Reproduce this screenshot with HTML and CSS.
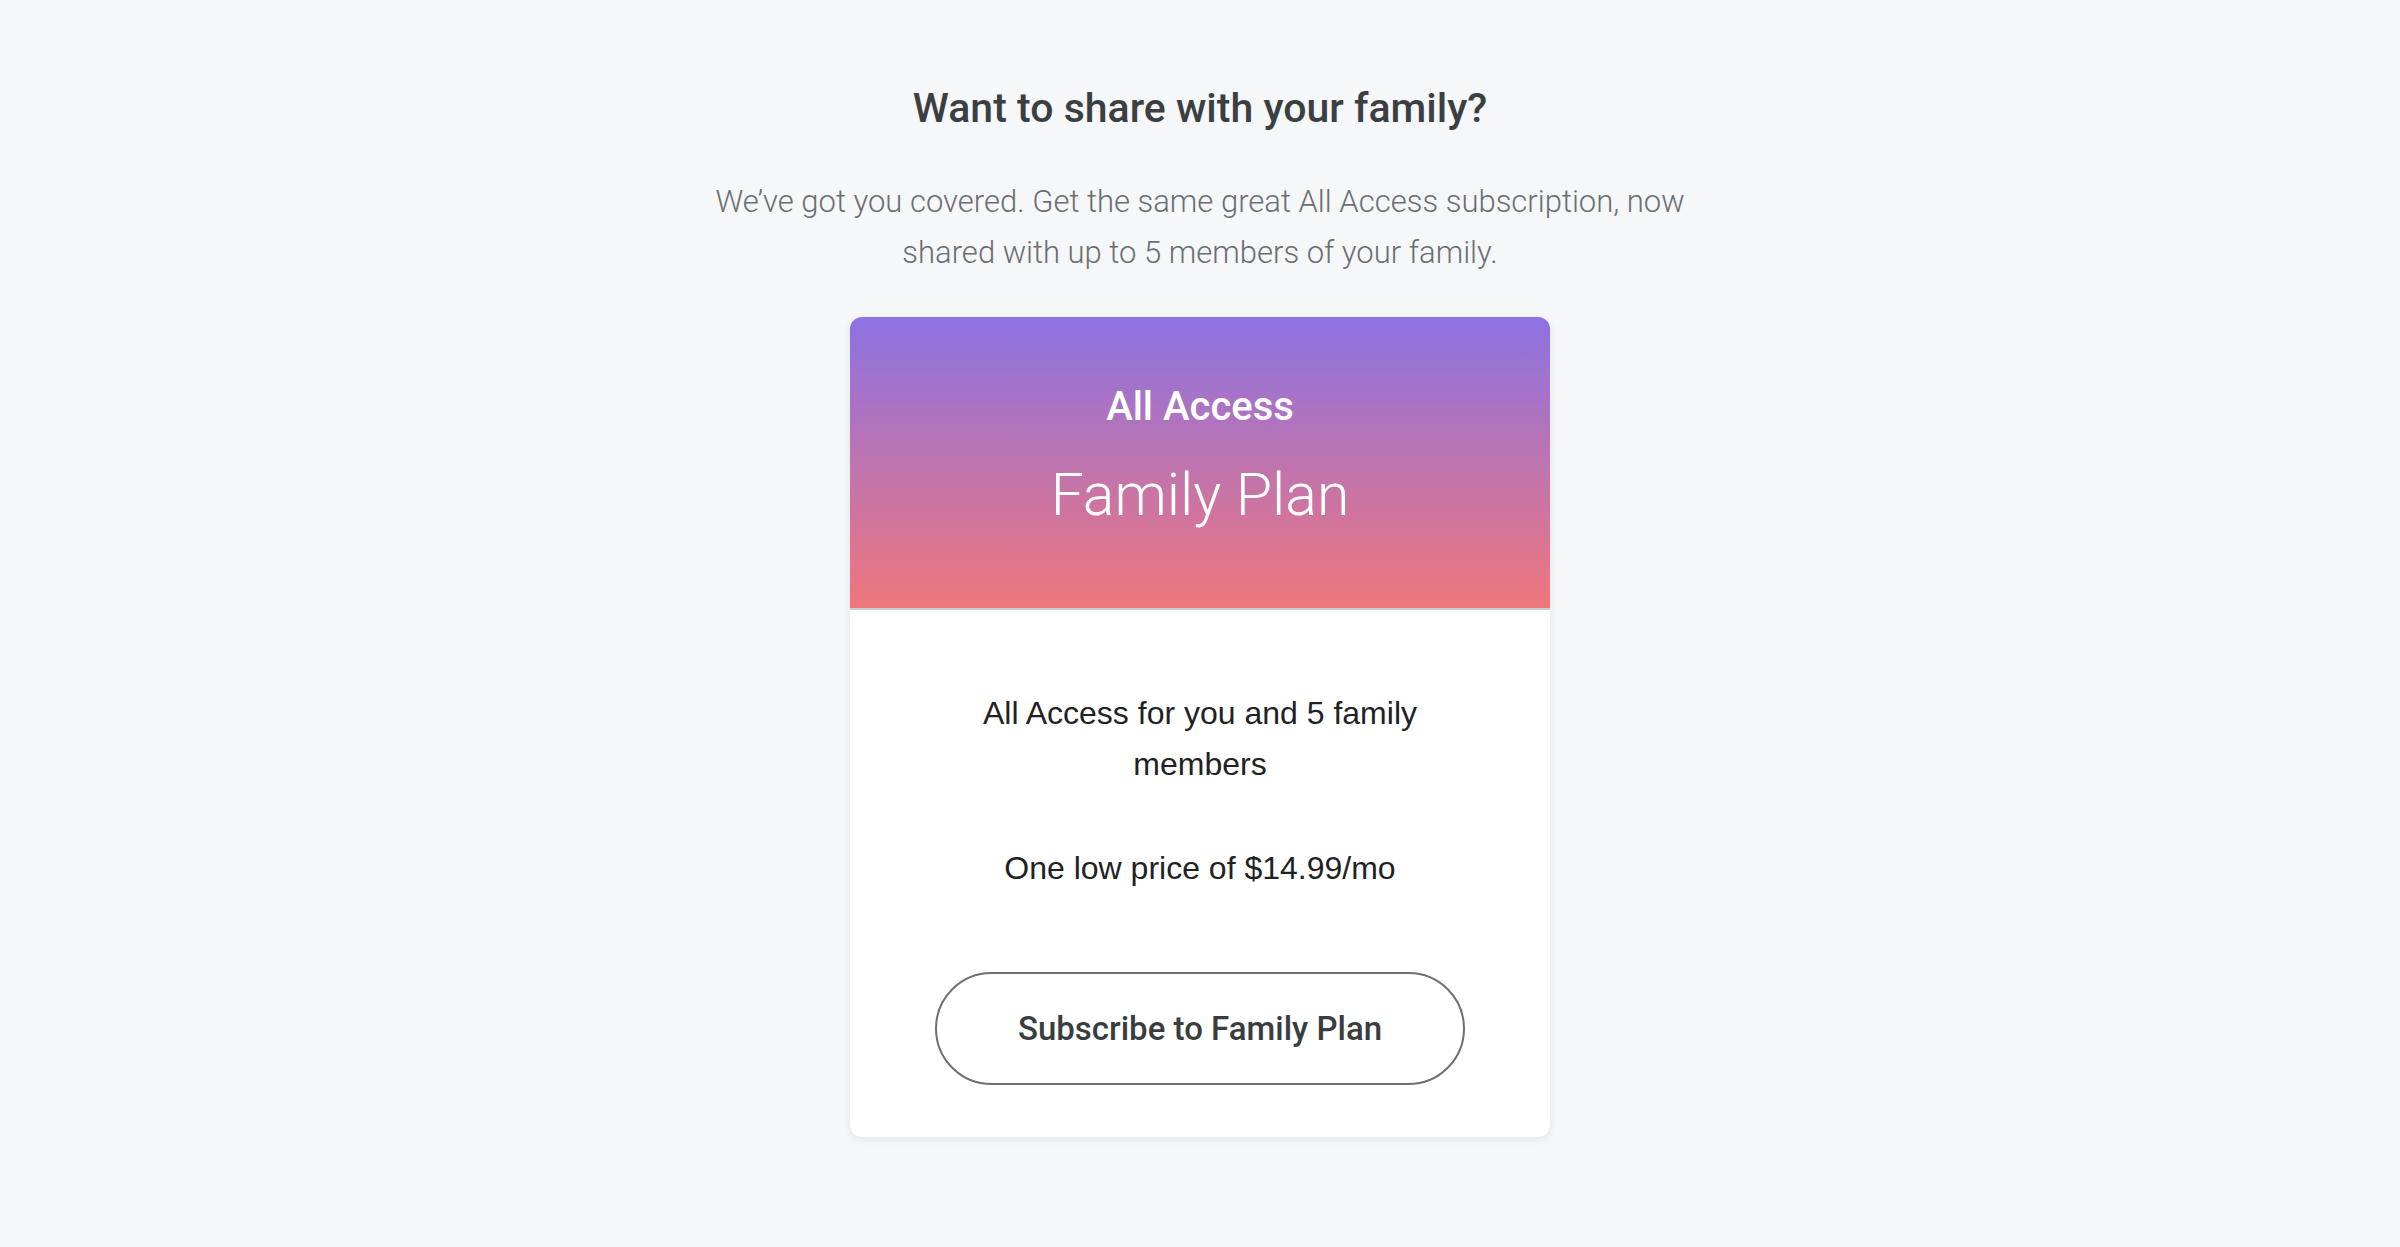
FILE: index.html
```html
<!DOCTYPE html>
<html lang="en">
<head>
  <meta charset="UTF-8" />
  <meta name="viewport" content="width=device-width, initial-scale=1.0" />
  <title>Family Plan</title>
  <link rel="stylesheet" href="styles.css">
</head>
<body>
  <section class="family">
    <h1>Want to share with your family?</h1>
    <p class="intro">We’ve got you covered. Get the same great All Access subscription, now shared with up to 5 members of your family.</p>

    <div class="plan">
      <div class="plan-head">
        <div class="plan-tier">All Access</div>
        <div class="plan-name">Family Plan</div>
      </div>
      <div class="plan-body">
        <p class="perk">All Access for you and 5 family members</p>
        <p class="perk price">One low price of $14.99/mo</p>
        <button class="subscribe" type="button">Subscribe to Family Plan</button>
      </div>
    </div>
  </section>
</body>
</html>
```

FILE: styles.css
```css
:root {
  --bg: #f6f7f9;
  --heading: #3b3f42;
  --muted: #6b6e71;
  --text: #1f2224;
  --purple: #8b72e3;
  --coral: #f0767c;
}
* {
  box-sizing: border-box;
}
body {
  margin: 0;
  min-height: 100vh;
  background: var(--bg);
  font-family: "Liberation Sans", Arial, sans-serif;
  color: var(--text);
}
.family {
  display: flex;
  flex-direction: column;
  align-items: center;
  padding: 84px 20px 60px;
  text-align: center;
}
h1 {
  margin: 0;
  font-family: Roboto, "Liberation Sans", sans-serif;
  font-size: 41px;
  line-height: 48px;
  font-weight: 500;
  color: var(--heading);
}
.intro {
  max-width: 1010px;
  margin: 44px 0 0;
  font-family: Roboto, "Liberation Sans", sans-serif;
  font-weight: 300;
  font-size: 31px;
  line-height: 51px;
  color: var(--muted);
}
.plan {
  width: 700px;
  margin-top: 39px;
  background: #fff;
  border-radius: 12px;
  overflow: hidden;
  box-shadow: 0 2px 10px rgba(0, 0, 0, 0.08);
}
.plan-head {
  padding: 66px 20px 77px;
  background: linear-gradient(180deg, var(--purple), var(--coral));
  border-bottom: 2px solid #c9d0d4;
  color: #fff;
  font-family: Roboto, "Liberation Sans", sans-serif;
}
.plan-tier {
  font-size: 40px;
  line-height: 48px;
  font-weight: 500;
}
.plan-name {
  margin-top: 28px;
  font-size: 59px;
  line-height: 72px;
  font-weight: 300;
}
.plan-body {
  display: flex;
  flex-direction: column;
  align-items: center;
  padding: 78px 40px 52px;
}
.perk {
  max-width: 480px;
  margin: 0;
  font-size: 32px;
  line-height: 51px;
}
.price {
  margin-top: 53px;
}
.subscribe {
  width: 530px;
  height: 113px;
  margin-top: 78px;
  border: 2px solid #6e6f73;
  border-radius: 60px;
  background: #fff;
  font-family: Roboto, "Liberation Sans", sans-serif;
  font-size: 33px;
  font-weight: 500;
  color: #3a3d40;
  cursor: pointer;
}
```
